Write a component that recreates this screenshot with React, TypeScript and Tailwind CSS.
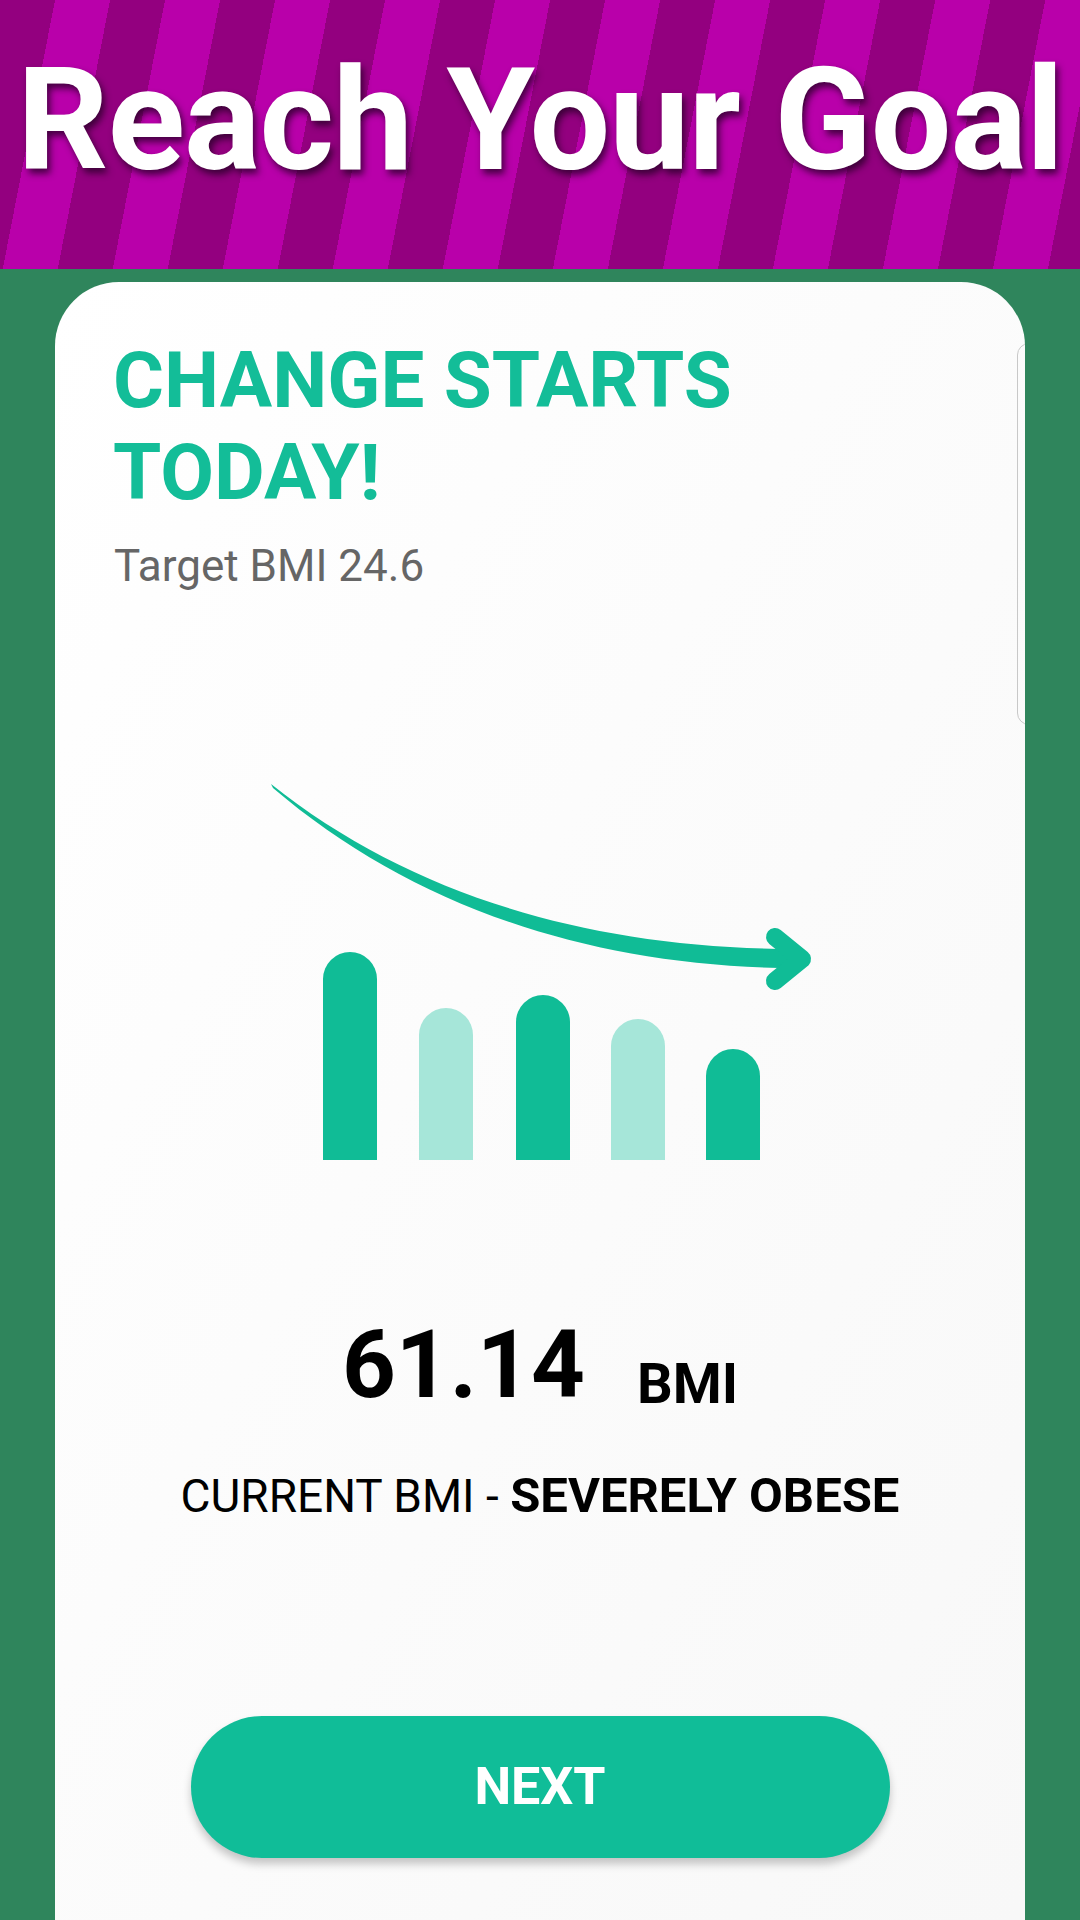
import React from 'react';

const font = { fontFamily: 'Roboto, "Noto Sans", sans-serif' };

function TrendChart() {
  // bars: x position, top y (bottom is shared)
  const bars = [
    { x: 63, top: 173, light: false },
    { x: 159, top: 229, light: true },
    { x: 256, top: 216, light: false },
    { x: 351, top: 240, light: true },
    { x: 446, top: 270, light: false },
  ];
  const bottom = 381;
  const w = 54;
  const r = w / 2;

  return (
    <svg width="560" height="390" viewBox="0 0 560 390" fill="none">
      {/* tapered shaft */}
      <path
        d="M11,5 C150,116 330,170 537,170 L537,189 C330,189 150,126 13,9 Z"
        fill="#10bc96"
      />
      <path
        d="M515,158 L542,180 L515,202"
        stroke="#10bc96"
        strokeWidth="18"
        strokeLinecap="round"
        strokeLinejoin="round"
      />
      {bars.map((b, i) => (
        <path
          key={i}
          d={`M${b.x},${bottom} V${b.top + r} A${r},${r} 0 0 1 ${b.x + w},${b.top + r} V${bottom} Z`}
          fill={b.light ? '#a6e6d9' : '#10bc96'}
        />
      ))}
    </svg>
  );
}

export default function App() {
  return (
    <div className="w-[1080px] h-[1920px] overflow-hidden bg-[#2f855c] flex flex-col" style={font}>
      {/* banner */}
      <div className="h-[269px] shrink-0 flex items-start justify-center pt-[40px] bg-[repeating-linear-gradient(101deg,#93007f_0px,#93007f_54px,#b900aa_54px,#b900aa_108px)]">
        <h1 className="text-[143px] leading-[160px] font-bold text-white tracking-[-1px] [text-shadow:3px_5px_7px_rgba(40,0,40,0.8)]">
          Reach Your Goal
        </h1>
      </div>

      {/* card */}
      <div className="relative flex-1 mt-[13px] mx-[55px] rounded-t-[64px] bg-linear-to-br from-white to-[#f8f8f8] overflow-hidden">
        <div className="absolute left-[962px] top-[61px] w-[24px] h-[382px] border border-[#c8c8c8] rounded-[14px]" />

        <div className="pl-[58px] pt-[53px]">
          <h2 className="text-[78px] leading-[92px] font-bold text-[#13bd98]">
            CHANGE STARTS
            <br />
            TODAY!
          </h2>
          <p className="mt-[20px] pl-[1px] text-[44px] leading-[54px] text-[#666666]">Target BMI 24.6</p>
        </div>

        <div className="mt-[186px] flex justify-center">
          <TrendChart />
        </div>

        <div className="mt-[149px] flex items-baseline justify-center gap-[52px]">
          <span className="text-[94px] leading-[94px] font-bold text-black">61.14</span>
          <span className="relative top-[6px] text-[56px] leading-[59px] font-bold text-black">BMI</span>
        </div>

        <p className="mt-[57px] text-center text-[46px] leading-[54px] text-black">
          CURRENT BMI - <span className="text-[49px] font-bold">SEVERELY OBESE</span>
        </p>

        <div className="mt-[193px] flex justify-center">
          <button className="w-[699px] h-[142px] rounded-full bg-[#10bd98] text-white text-[52px] font-bold shadow-[0_6px_8px_rgba(0,0,0,0.22)]">
            NEXT
          </button>
        </div>
      </div>
    </div>
  );
}
